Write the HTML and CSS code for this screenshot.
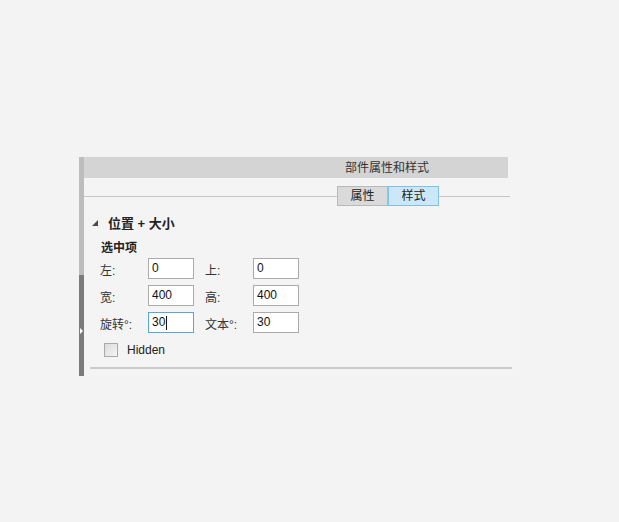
FILE: index.html
```html
<!DOCTYPE html>
<html lang="zh-CN">
<head>
<meta charset="utf-8">
<title>部件属性和样式</title>
<link rel="stylesheet" href="styles.css">
</head>
<body>
<div class="panel">
  <div class="scroll">
    <div class="scroll-top"></div>
    <div class="scroll-bottom"><span class="arrow"></span></div>
  </div>
  <div class="content">
    <div class="titlebar">部件属性和样式</div>
    <div class="tabrow">
      <div class="tab">属性</div>
      <div class="tab active">样式</div>
    </div>
    <div class="section-title">
      <svg class="tri" width="6" height="6" viewBox="0 0 6 6"><polygon points="6,0 6,6 0,6" fill="#4a4a4a"/></svg>
      <span>位置 + 大小</span>
    </div>
    <div class="group-title">选中项</div>
    <div class="row">
      <span class="label">左:</span><div class="field">0</div>
      <span class="label second">上:</span><div class="field">0</div>
    </div>
    <div class="row">
      <span class="label">宽:</span><div class="field">400</div>
      <span class="label second">高:</span><div class="field">400</div>
    </div>
    <div class="row">
      <span class="label">旋转°:</span><div class="field focus">30<span class="caret"></span></div>
      <span class="label second">文本°:</span><div class="field">30</div>
    </div>
    <div class="check-row">
      <span class="checkbox"></span><span class="check-label">Hidden</span>
    </div>
    <div class="bottom-line"></div>
  </div>
</div>
</body>
</html>
```
FILE: styles.css
```css
html, body {
  margin: 0;
  padding: 0;
}
body {
  background: #f3f3f3;
  width: 619px;
  height: 522px;
  overflow: hidden;
  font-family: "Liberation Sans", "Noto Sans CJK SC", sans-serif;
  font-size: 12px;
  color: #333;
}
.panel {
  display: flex;
  margin: 157px 0 0 79px;
  width: 434px;
  height: 219px;
}
.scroll {
  width: 5px;
  display: flex;
  flex-direction: column;
}
.scroll-top {
  height: 118px;
  background: #bdbdbd;
}
.scroll-bottom {
  flex: 1;
  background: #7b7b7b;
  display: flex;
  flex-direction: column;
  padding-top: 53px;
}
.arrow {
  display: block;
  width: 0;
  height: 0;
  margin-left: 1px;
  border-top: 3px solid transparent;
  border-bottom: 3px solid transparent;
  border-left: 3px solid #ffffff;
}
.content {
  flex: 1;
  display: flex;
  flex-direction: column;
  background: #f4f4f4;
}
.titlebar {
  height: 21px;
  width: 424px;
  background: #d4d4d4;
  line-height: 22px;
  padding-left: 261px;
  box-sizing: border-box;
  color: #333;
}
.tabrow {
  height: 34px;
  width: 426px;
  display: flex;
  padding-left: 253px;
  padding-top: 8px;
  box-sizing: border-box;
  background: linear-gradient(#c6c6c6, #c6c6c6) no-repeat 0 18px / 100% 1px;
}
.tab {
  width: 51px;
  height: 20px;
  box-sizing: border-box;
  border: 1px solid #b9b9b9;
  background: #dadada;
  text-align: center;
  line-height: 18px;
  color: #222;
}
.tab.active {
  background: #cce8f8;
  border-color: #7cc3ea;
}
.section-title {
  margin-top: 2px;
  height: 16px;
  display: flex;
  align-items: center;
  padding-left: 8px;
  font-size: 13px;
  font-weight: bold;
  color: #222;
}
.tri {
  margin-right: 10px;
  margin-top: 2px;
}
.group-title {
  margin-top: 10px;
  height: 16px;
  line-height: 16px;
  padding-left: 17px;
  font-weight: bold;
  color: #222;
}
.row {
  margin-top: 2px;
  margin-bottom: 4px;
  height: 21px;
  display: flex;
  align-items: center;
  padding-left: 16px;
}
.label {
  width: 48px;
  line-height: 16px;
  padding-top: 5px;
  color: #333;
}
.label.second {
  margin-left: 11px;
}
.field {
  width: 46px;
  height: 21px;
  box-sizing: border-box;
  border: 1px solid #ababab;
  background: #ffffff;
  padding-left: 3px;
  line-height: 19px;
  font-size: 12px;
  color: #111;
  display: flex;
  align-items: center;
}
.field.focus {
  border-color: #56a8db;
}
.caret {
  display: block;
  width: 1px;
  height: 14px;
  background: #111;
  margin-left: 1px;
}
.check-row {
  margin-top: 6px;
  height: 14px;
  display: flex;
  align-items: center;
  padding-left: 20px;
}
.checkbox {
  width: 14px;
  height: 14px;
  box-sizing: border-box;
  border: 1px solid #a9a9a9;
  background: linear-gradient(135deg, #dcdcdc, #f4f4f4);
}
.check-label {
  margin-left: 9px;
  color: #222;
  line-height: 14px;
}
.bottom-line {
  margin-top: 10px;
  margin-left: 6px;
  width: 422px;
  height: 2px;
  background: #cacaca;
}
```
